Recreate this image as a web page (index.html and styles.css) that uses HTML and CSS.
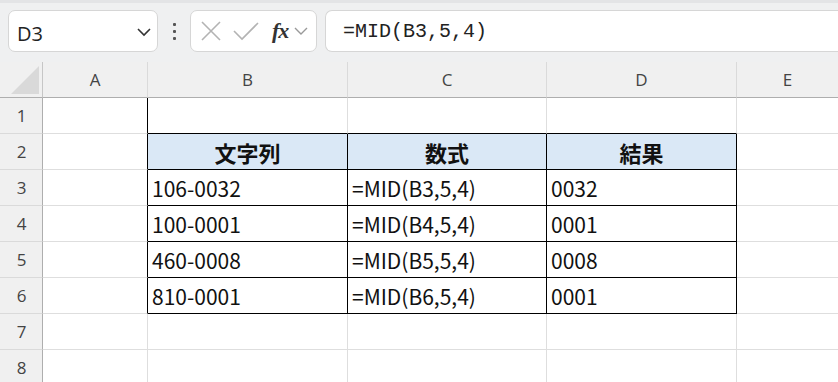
FILE: index.html
```html
<!DOCTYPE html>
<html lang="ja">
<head>
<meta charset="utf-8">
<link rel="stylesheet" href="styles.css">
</head>
<body>
<div class="app">
  <div class="fbar">
    <div class="namebox">
      <span class="ref">D3</span>
      <svg class="chev" width="16" height="10" viewBox="0 0 16 10"><path d="M2 2 L8 8 L14 2" fill="none" stroke="#333" stroke-width="1.6"/></svg>
    </div>
    <div class="dots"><i></i><i></i><i></i></div>
    <div class="btns">
      <svg width="22" height="22" viewBox="0 0 22 22"><path d="M2 2 L20 20 M20 2 L2 20" stroke="#b3b3b3" stroke-width="1.6" fill="none"/></svg>
      <svg width="28" height="22" viewBox="0 0 28 22"><path d="M2 11 L10 19 L26 3" stroke="#b3b3b3" stroke-width="1.6" fill="none"/></svg>
      <span class="fx">fx</span>
      <svg width="14" height="10" viewBox="0 0 14 10"><path d="M1 2 L7 8 L13 2" fill="none" stroke="#999" stroke-width="1.4"/></svg>
    </div>
    <div class="formula">=MID(B3,5,4)</div>
  </div>
  <div class="sheet">
    <div class="corner"><div class="tri"></div></div>
    <div class="ch">A</div><div class="ch">B</div><div class="ch">C</div><div class="ch">D</div><div class="ch last">E</div>

    <div class="rh">1</div><div class="c lb"></div><div class="c tb"></div><div class="c tb"></div><div class="c tb"></div><div class="c last"></div>

    <div class="rh">2</div><div class="c lb"></div><div class="c t hd">文字列</div><div class="c t hd">数式</div><div class="c t hd">結果</div><div class="c last"></div>

    <div class="rh">3</div><div class="c lb"></div><div class="c t">106-0032</div><div class="c t">=MID(B3,5,4)</div><div class="c t">0032</div><div class="c last"></div>
    <div class="rh">4</div><div class="c lb"></div><div class="c t">100-0001</div><div class="c t">=MID(B4,5,4)</div><div class="c t">0001</div><div class="c last"></div>
    <div class="rh">5</div><div class="c lb"></div><div class="c t">460-0008</div><div class="c t">=MID(B5,5,4)</div><div class="c t">0008</div><div class="c last"></div>
    <div class="rh">6</div><div class="c lb"></div><div class="c t">810-0001</div><div class="c t">=MID(B6,5,4)</div><div class="c t">0001</div><div class="c last"></div>

    <div class="rh">7</div><div class="c"></div><div class="c"></div><div class="c"></div><div class="c"></div><div class="c last"></div>
    <div class="rh">8</div><div class="c"></div><div class="c"></div><div class="c"></div><div class="c"></div><div class="c last"></div>
  </div>
</div>
</body>
</html>
```

FILE: styles.css
```css
* { box-sizing: border-box; }
html, body { margin: 0; padding: 0; }
body {
  width: 838px;
  height: 382px;
  overflow: hidden;
  background: #fff;
  font-family: "Noto Sans CJK JP", "Noto Sans", sans-serif;
}
.app { display: flex; flex-direction: column; }
.fbar {
  height: 62px;
  background: #eff0f1;
  border-top: 3px solid #e3e4e6;
  display: flex;
  align-items: flex-start;
  padding-top: 7px;
  padding-left: 8px;
}
.namebox {
  width: 150px;
  height: 42px;
  background: #fff;
  border: 1px solid #d6d6d6;
  border-radius: 7px;
  display: flex;
  align-items: center;
  justify-content: space-between;
  padding: 0 5px 0 8px;
}
.ref {
  font-family: "Open Sans", "Noto Sans", sans-serif;
  font-size: 20px;
  color: #222;
  padding-top: 4px;
}
.chev { margin-top: 2px; }
.dots {
  width: 32px;
  height: 42px;
  display: flex;
  flex-direction: column;
  align-items: center;
  justify-content: center;
  gap: 4px;
}
.dots i {
  display: block;
  width: 3px;
  height: 3px;
  background: #555;
  border-radius: 1px;
}
.btns {
  width: 127px;
  height: 42px;
  background: #fff;
  border: 1px solid #d6d6d6;
  border-radius: 7px;
  display: flex;
  align-items: center;
  padding-left: 9px;
}
.btns svg:nth-child(1) { margin-right: 10px; }
.btns svg:nth-child(2) { margin-right: 12px; }
.fx {
  font-family: "Liberation Serif", "DejaVu Serif", serif;
  font-style: italic;
  font-weight: bold;
  font-size: 22px;
  color: #333;
  margin-right: 6px;
  letter-spacing: -1px;
}
.formula {
  flex: 1;
  height: 42px;
  margin-left: 8px;
  background: #fff;
  border: 1px solid #d6d6d6;
  border-right: none;
  border-radius: 7px 0 0 7px;
  font-family: "Liberation Mono", "DejaVu Sans Mono", monospace;
  font-size: 20px;
  color: #222;
  display: flex;
  align-items: center;
  padding-left: 17px;
  padding-top: 1px;
}
.sheet {
  display: grid;
  grid-template-columns: 43px 105px 200px 199px 190px 1fr;
  grid-template-rows: 36px repeat(8, 36px);
}
.corner {
  background: #f0f0f0;
  border-right: 1px solid #c6c6c6;
  border-bottom: 1px solid #aeaeae;
  position: relative;
}
.tri {
  position: absolute;
  right: 3px;
  bottom: 3px;
  width: 28px;
  height: 28px;
  background: #d9d9d9;
  clip-path: polygon(100% 0, 100% 100%, 0 100%);
}
.ch {
  background: #f0f0f0;
  border-right: 1px solid #dadada;
  border-bottom: 1px solid #aeaeae;
  display: flex;
  align-items: center;
  justify-content: center;
  font-family: "Open Sans", "Noto Sans", sans-serif;
  font-size: 17px;
  color: #444;
}
.rh {
  background: #f0f0f0;
  border-right: 1px solid #aeaeae;
  border-bottom: 1px solid #dadada;
  display: flex;
  align-items: center;
  justify-content: center;
  font-family: "Open Sans", "Noto Sans", sans-serif;
  font-size: 17px;
  color: #444;
  padding-left: 1px;
}
.c {
  border-right: 1px solid #dedede;
  border-bottom: 1px solid #dedede;
  font-size: 21px;
  color: #111;
  display: flex;
  align-items: center;
  padding-left: 4px;
  white-space: nowrap;
}
.c.last { border-right: none; }
.ch.last { border-right: none; }
.c.lb { border-right-color: #000; }
.c.tb { border-bottom-color: #000; }
.c.t { border-right-color: #000; border-bottom-color: #000; }
.c.hd {
  background: #dae8f6;
  font-weight: bold;
  font-size: 22px;
  justify-content: center;
  padding-left: 0;
}
```
